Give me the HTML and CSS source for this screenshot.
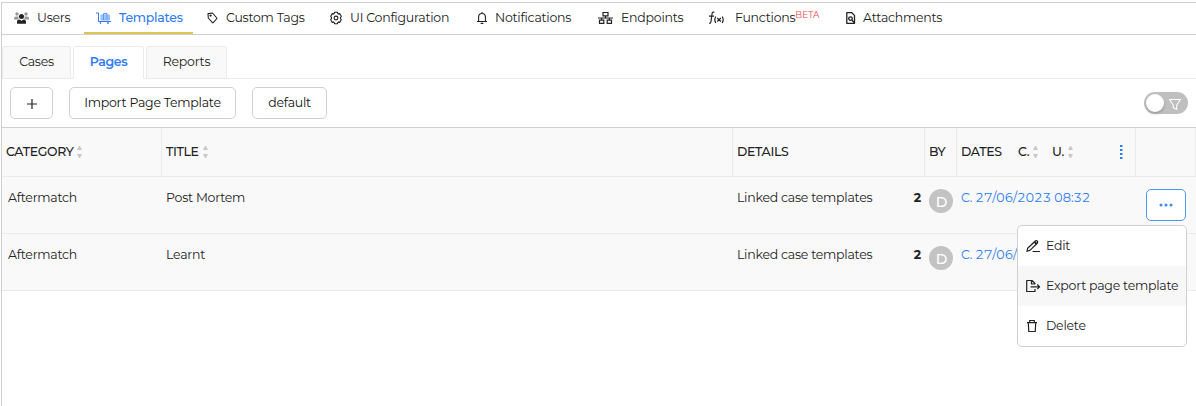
FILE: index.html
```
<!DOCTYPE html>
<html lang="en">
<head>
<meta charset="utf-8">
<title>Page templates</title>
<link rel="stylesheet" href="styles.css">
</head>
<body>
<div class="app">
  <nav class="nav">
    <a class="nav-item users"><svg class="icon" width="15" height="14" viewBox="0 0 15 14"><g fill="#999"><circle cx="3" cy="3" r="1.700"/><circle cx="12" cy="3" r="1.700"/><path d="M0 8.500V7.200Q0 5.500 2 5.500h2.500v3zM15 8.500V7.200Q15 5.500 13 5.500h-2.500v3z"/></g><g fill="#222"><circle cx="7.500" cy="5.500" r="2.500"/><path d="M3 12.800v-2Q3 8.500 5.200 8.500l2.300 1.200 2.300-1.200q2.200 0 2.200 2.300v2z"/></g></svg><span>Users</span></a>
    <a class="nav-item templates"><svg class="icon" width="15" height="14" viewBox="0 0 15 14" fill="none" stroke="#2f7cf6"><path d="M0 2h2.500v8.500H15"/><path d="M5 4h8.500v5H5z" fill="#9fc4fa" stroke="#8db9f8"/><path d="M7.500 9V2.500h3.500V9" stroke="#5b98f3"/><circle cx="4.500" cy="12" r=".6"/><circle cx="12" cy="12" r=".6"/></svg><span>Templates</span></a>
    <a class="nav-item tags"><svg class="icon" width="13" height="14" viewBox="0 0 13 14" fill="none" stroke="#222" stroke-width="1.100"><path d="M2 2.600 6.500 2l4.300 5-.3 1-3.300 3.700-.8-.1L2.300 7z" stroke-linejoin="round"/><circle cx="4.600" cy="4.600" r=".6"/></svg><span>Custom Tags</span></a>
    <a class="nav-item config"><svg class="icon" width="14" height="14" viewBox="0 0 14 14" fill="none" stroke="#222" stroke-width="1.100"><path d="M5.600 1.300h2.800l.6 1.600 1.700-.3 1.600 2.600L11.300 7l1 1.800-1.600 2.600-1.700-.3-.6 1.600H5.600L5 11.100l-1.700.3-1.600-2.600L2.700 7l-1-1.800 1.600-2.600 1.700.3z" stroke-linejoin="round"/><circle cx="7" cy="7" r="1.900"/></svg><span>UI Configuration</span></a>
    <a class="nav-item notif"><svg class="icon" width="12" height="14" viewBox="0 0 12 14" fill="none" stroke="#222" stroke-width="1.100"><path d="M2.600 10V6Q2.600 2.500 6 2.500T9.400 6v4M1 10.500h10M6 1v1.500M4.700 12q1.300 1 2.600 0"/></svg><span>Notifications</span></a>
    <a class="nav-item endp"><svg class="icon" width="15" height="14" viewBox="0 0 15 14" fill="none" stroke="#222" stroke-width="1.200"><path d="M5 1.500h5v3.300H5zM1.500 9.200h4.300v3.200H1.500zM9.200 9.200h4.300v3.200H9.200zM7.500 5v2M3.600 9V7h7.800v2M0 7h15"/></svg><span>Endpoints</span></a>
    <a class="nav-item func"><svg class="icon" width="17" height="16" viewBox="0 0 17 16" fill="none" stroke="#222" stroke-width="1.200"><path d="M6.500 2.200Q4.300 1.500 4 4L3 11.500Q2.700 13.500 1 13.200M1 6.200h5M7.800 6.500q-2 3 0 6.500M14.200 6.500q2 3 0 6.500M9.300 8l3.500 3.500M12.800 8l-3.500 3.500"/></svg><span>Functions</span><span class="beta">BETA</span></a>
    <a class="nav-item attach"><svg class="icon" width="12" height="14" viewBox="0 0 12 14" fill="none" stroke="#222" stroke-width="1.300"><path d="M1.800 1.700h5l2.700 2.700v7.900H1.800z" stroke-linejoin="round"/><circle cx="5.500" cy="7.600" r="1.800"/><path d="m6.800 9 2.500 2.800"/></svg><span>Attachments</span></a>
  </nav>

  <div class="tabs">
    <div class="tab cases">Cases</div>
    <div class="tab pages active">Pages</div>
    <div class="tab reports">Reports</div>
  </div>

  <div class="toolbar">
    <button class="btn add"><svg width="12" height="12" viewBox="0 0 12 12" stroke="#222" stroke-width="1.200"><path d="M1 6h10M6 1v10"/></svg></button>
    <button class="btn import">Import Page Template</button>
    <button class="btn default">default</button>
    <div class="switch"><span class="knob"></span><svg width="14" height="13" viewBox="0 0 14 13" fill="none" stroke="#fff" stroke-width="1.100"><path d="M1.500 1.500h11L8.700 7.200v4.300L5.300 9.800V7.200z" stroke-linejoin="round"/></svg></div>
  </div>

  <div class="table">
    <div class="row head">
      <div class="cell"><span class="h-category">CATEGORY</span><i class="sort"></i></div>
      <div class="cell"><span class="h-title">TITLE</span><i class="sort"></i></div>
      <div class="cell"><span class="h-details">DETAILS</span></div>
      <div class="cell"><span class="h-by">BY</span></div>
      <div class="cell"><span class="h-dates">DATES</span><span class="h-created">C.</span><i class="sort"></i><span class="h-updated">U.</span><i class="sort"></i><svg class="kebab" width="3" height="14" viewBox="0 0 3 14" fill="#2f7cf6"><path d="M0 0h2.500v2H0zM0 4h2.500v2H0zM0 8h2.500v2H0zM0 12h2.500v2H0z"/></svg></div>
      <div class="cell"></div>
    </div>
    <div class="row">
      <div class="cell category">Aftermatch</div>
      <div class="cell post">Post Mortem</div>
      <div class="cell details"><span>Linked case templates</span><b>2</b></div>
      <div class="cell"><span class="avatar">D</span></div>
      <div class="cell date">C. 27/06/2023 08:32</div>
      <div class="cell actions"><button class="more"><svg width="14" height="4" viewBox="0 0 14 4" fill="#3c8af5"><circle cx="2" cy="2" r="1.500"/><circle cx="7" cy="2" r="1.500"/><circle cx="12" cy="2" r="1.500"/></svg></button></div>
    </div>
    <div class="row">
      <div class="cell category">Aftermatch</div>
      <div class="cell learnt">Learnt</div>
      <div class="cell details"><span>Linked case templates</span><b>2</b></div>
      <div class="cell"><span class="avatar">D</span></div>
      <div class="cell date">C. 27/06/2023 08:32</div>
      <div class="cell"></div>
    </div>
  </div>

  <div class="menu">
    <div class="menu-item edit"><svg width="15" height="14" viewBox="0 0 15 14" fill="none" stroke="#222" stroke-width="1.200"><path d="m.9 12.300.8-3L9.300 2q1-.8 2 0t0 2.200L3.900 11.400zM6.500 12.500H14" stroke-linejoin="round"/><path d="m8.700 3 2 2" stroke-width="2"/></svg><span>Edit</span></div>
    <div class="menu-item export hover"><svg width="15" height="14" viewBox="0 0 15 14" fill="none" stroke="#222" stroke-width="1.200"><path d="M9 5.300V4.500L6 1.500H.7v11H9V10M5.500 1.500v3.500H9M4.500 7.800h8.800M11.300 5.500l2.300 2.300-2.300 2.300" stroke-linejoin="round"/></svg><span>Export page template</span></div>
    <div class="menu-item delete"><svg width="15" height="14" viewBox="0 0 15 14" fill="none" stroke="#222" stroke-width="1.200"><path d="M1 3.700h10M3.700 3.500v-2h4.600v2M2.300 4l.5 8.500h6.400l.5-8.500"/></svg><span>Delete</span></div>
  </div>
</div>
</body>
</html>
```
FILE: styles.css
```
* { box-sizing: border-box; }
body {
  margin: 0;
  background: #fff;
  color: #222;
  font: 12.5px/16px Montserrat, Inter, sans-serif;
  letter-spacing: -.24px;
  overflow: hidden;
}
.app {
  position: relative;
  height: 404px;
  margin: 2px 0 0 1px;
  border-top: 1px solid #d0d0d0;
  border-left: 1px solid #d0d0d0;
}

/* Main navigation */
.nav {
  display: flex;
  height: 32px;
  border-bottom: 1px solid #d0d0d0;
}
.nav-item {
  display: flex;
  align-items: center;
  flex: none;
  height: 31px;
  padding-bottom: 1px;
  white-space: nowrap;
}
.icon { flex: none; }
.users { width: 82px; padding-left: 12px; }
.users .icon { margin-right: 8px; }
.templates {
  width: 109px;
  padding: 1px 0 0 12px;
  border-bottom: 2px solid #dcc650;
  color: #2f7cf6;
  font-weight: 500;
}
.templates .icon { margin-right: 8px; }
.tags { width: 136px; padding-left: 13px; }
.tags .icon { margin-right: 7px; }
.config { width: 147px; }
.config .icon { margin-right: 7px; }
.notif { width: 122px; }
.notif .icon { margin-right: 7px; }
.endp { width: 110px; }
.endp .icon { margin-right: 8px; }
.func { width: 137px; }
.func .icon { margin-right: 10px; }
.attach .icon { margin-right: 6px; }
.beta {
  margin-top: -7px;
  color: #f04848;
  font-size: 9px;
  letter-spacing: .03px;
}

/* Secondary tabs */
.tabs {
  display: flex;
  gap: 2px;
  height: 44px;
  padding-top: 11px;
  border-bottom: 1px solid #ebebeb;
}
.tab {
  height: 33px;
  padding-top: 7px;
  border: 1px solid #ebebeb;
  border-radius: 2px 2px 0 0;
  background: #f9f9f9;
  text-align: center;
}
.cases { width: 69px; }
.pages { width: 71px; }
.reports { width: 81px; }
.tab.active {
  border-bottom-color: #fff;
  background: #fff;
  color: #2f7cf6;
  font-weight: 600;
  letter-spacing: -.35px;
}

/* Toolbar */
.toolbar {
  display: flex;
  gap: 16px;
  height: 48px;
  padding: 8px;
}
.btn {
  display: flex;
  align-items: center;
  justify-content: center;
  height: 32px;
  padding: 0 0 1px;
  border: 1px solid #d0d0d0;
  border-radius: 5px;
  background: #fff;
  color: #111;
  font: inherit;
  letter-spacing: inherit;
  white-space: nowrap;
}
.add { width: 43px; padding-top: 2px; }
.import { width: 167px; }
.default { width: 75px; }
.switch {
  display: flex;
  align-items: center;
  justify-content: space-between;
  width: 44px;
  height: 22px;
  margin: 5px 0 0 auto;
  padding: 0 6px 0 2px;
  border-radius: 11px;
  background: #bfbfbf;
}
.switch svg { margin-top: 2px; }
.knob {
  width: 18px;
  height: 18px;
  border-radius: 50%;
  background: #fff;
  box-shadow: 0 2px 3px rgba(0, 35, 11, .2);
}

/* Template list */
.table { border-top: 1px solid #d0d0d0; background: #f9f9f9; }
.row {
  display: grid;
  grid-template-columns: 160px 571px 192px 32px 179px 60px;
  height: 57px;
  border-bottom: 1px solid #ebebeb;
}
.cell { padding: 13px 4px 0; white-space: nowrap; }
.head { height: 49px; font-weight: 500; letter-spacing: -.34px; }
.head .cell {
  display: flex;
  align-items: center;
  padding: 0 4px;
  border-right: 1px solid #ebebeb;
}
.cell.category { padding-left: 6px; }
.sort {
  display: flex;
  flex-direction: column;
  justify-content: space-between;
  width: 5px;
  height: 12px;
  margin: -1px 0 0 4px;
}
.sort::before, .sort::after {
  content: "";
  border: 2.5px solid transparent;
}
.sort::before { border-top: 0; border-bottom: 4px solid #c8c8c8; }
.sort::after { border-bottom: 0; border-top: 4px solid #c8c8c8; }
.h-category { width: 67px; }
.h-title { width: 33px; }
.h-dates { width: 57px; }
.h-created { width: 11px; }
.h-updated { width: 12px; margin-left: 14px; }
.kebab { margin-left: auto; margin-right: 8px; }
.details { display: flex; justify-content: space-between; }
.cell.details { padding-right: 4px; }
.avatar {
  display: flex;
  align-items: center;
  justify-content: center;
  width: 24px;
  height: 24px;
  margin-top: -1px;
  padding: 1px 0 0 1px;
  border-radius: 50%;
  background: #c3c3c3;
  color: #fff;
  font-size: 14px;
  font-weight: 500;
}
.date { color: #2f7cf6; font-variant-numeric: tabular-nums; letter-spacing: -.26px; }
.actions { padding: 12px 0 0 10px; }
.more {
  display: flex;
  align-items: center;
  justify-content: center;
  width: 40px;
  height: 32px;
  padding: 0;
  border: 1px solid #4c98f7;
  border-radius: 5px;
  background: #fff;
}

/* Row action menu */
.menu {
  position: absolute;
  top: 222px;
  left: 1015px;
  width: 170px;
  height: 122px;
  border: 1px solid #d0d0d0;
  border-radius: 5px;
  background: #fff;
  overflow: hidden;
}
.menu-item {
  display: flex;
  align-items: center;
  gap: 5px;
  height: 40px;
  padding-left: 8px;
  white-space: nowrap;
}
.menu-item.hover { background: #f7f7f7; }
```
